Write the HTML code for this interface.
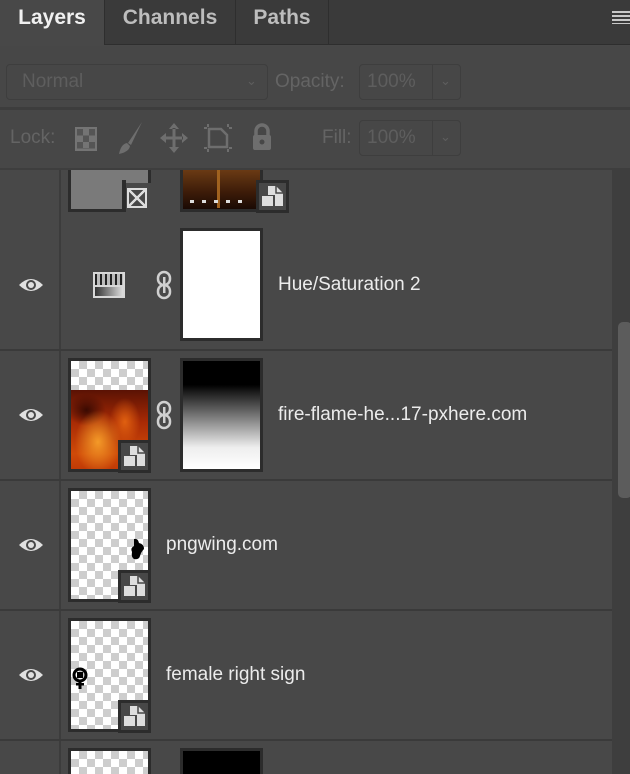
<!DOCTYPE html>
<html><head><meta charset="utf-8"><style>
*{margin:0;padding:0;box-sizing:border-box}
html,body{width:630px;height:774px;overflow:hidden}
body{background:#484848;font-family:"Liberation Sans",sans-serif;position:relative;color:#e6e6e6}
.a{position:absolute}
.tabbar{left:0;top:0;width:630px;height:45px;background:#3a3a3a;border-bottom:1px solid #2e2e2e}
.tab{top:0;height:45px;font-weight:bold;font-size:21px;line-height:35px;color:#bdbdbd;text-align:center}
.chk{background-color:#fff;background-image:linear-gradient(45deg,#cdcdcd 25%,transparent 25%,transparent 75%,#cdcdcd 75%),linear-gradient(45deg,#cdcdcd 25%,transparent 25%,transparent 75%,#cdcdcd 75%);background-size:16px 16px;background-position:0 0,8px 8px}
.th{border:3px solid #2c2c2c}
.sep{left:0;width:612px;height:2px;background:#3a3a3a}
.lbl{font-size:19px;color:#ececec}
.field{border:1px solid #3e3e3e;border-radius:4px;height:34px;font-size:19px;color:#5e5e5e;line-height:32px}
</style></head><body>
<div class="a tabbar"></div>
<div class="a tab" style="left:0;width:104px;background:#484848;color:#f0f0f0;height:46px">Layers</div>
<div class="a" style="left:104px;top:0;width:1px;height:45px;background:#2e2e2e"></div>
<div class="a tab" style="left:105px;width:130px">Channels</div>
<div class="a" style="left:235px;top:0;width:1px;height:45px;background:#2e2e2e"></div>
<div class="a tab" style="left:236px;width:92px">Paths</div>
<div class="a" style="left:328px;top:0;width:1px;height:45px;background:#2e2e2e"></div>
<div class="a" style="left:612px;top:11px;width:18px;height:13px;background:repeating-linear-gradient(#c8c8c8 0 2px,transparent 2px 4px)"></div>

<div class="a" style="left:0;top:46px;width:630px;height:62px;background:#474747"></div>
<div class="a field" style="left:6px;top:64px;width:262px;height:36px;padding-left:15px;line-height:34px">Normal</div>
<div class="a" style="left:246px;top:73px;font-size:13px;color:#5e5e5e">&#8964;</div>
<div class="a" style="left:275px;top:65px;font-size:19px;color:#646464;line-height:34px">Opacity:</div>
<div class="a field" style="left:359px;top:64px;width:102px;height:36px;padding-left:7px;line-height:34px">100%</div>
<div class="a" style="left:432px;top:65px;width:1px;height:34px;background:#3e3e3e"></div>
<div class="a" style="left:440px;top:73px;font-size:13px;color:#5e5e5e">&#8964;</div>
<div class="a" style="left:0;top:107px;width:630px;height:3px;background:#3d3d3d"></div>
<div class="a" style="left:0;top:110px;width:630px;height:59px;background:#474747"></div>
<div class="a" style="left:10px;top:121px;font-size:19px;color:#646464;line-height:34px">Lock:</div>
<div class="a" style="left:75px;top:127px;width:22px;height:24px;border:2px solid #747474;background:conic-gradient(#747474 25%,#555 0 50%,#747474 0 75%,#555 0);background-size:12px 13px"></div>
<svg class="a" style="left:117px;top:121px" width="26" height="34"><path d="M25 1 L11 22 L14 24 Z M10 22 Q4 23 2 33 Q12 31 13 25 Z" fill="#6e6e6e"/></svg>
<svg class="a" style="left:159px;top:122px" width="30" height="32"><path d="M15 1 L10 7 H20 Z M15 31 L10 25 H20 Z M1 16 L7 11 V21 Z M29 16 L23 11 V21 Z M13.5 6 H16.5 V26 H13.5 Z M6 14.5 H24 V17.5 H6 Z" fill="#6e6e6e"/></svg>
<svg class="a" style="left:203px;top:123px" width="30" height="30"><path d="M6 6 H18 L24 12 V24 H6 Z" fill="none" stroke="#6e6e6e" stroke-width="2.5"/><path d="M1 5h3M26 5h3M1 25h3M26 25h3M5 1v3M5 26v3M25 1v3M25 26v3" stroke="#6e6e6e" stroke-width="2"/></svg>
<svg class="a" style="left:251px;top:123px" width="22" height="28"><path d="M5 13 V8 A6 6 0 0 1 17 8 V13" fill="none" stroke="#6e6e6e" stroke-width="3.5"/><rect x="2" y="12" width="18" height="15" rx="2" fill="#6e6e6e"/><circle cx="11" cy="19" r="2.5" fill="#474747"/></svg>
<div class="a" style="left:322px;top:121px;font-size:19px;color:#646464;line-height:34px">Fill:</div>
<div class="a field" style="left:359px;top:120px;width:102px;height:36px;padding-left:7px;line-height:34px">100%</div>
<div class="a" style="left:432px;top:121px;width:1px;height:34px;background:#3e3e3e"></div>
<div class="a" style="left:440px;top:129px;font-size:13px;color:#5e5e5e">&#8964;</div>
<div class="a" style="left:0;top:168px;width:630px;height:2px;background:#3e3e3e"></div>

<div class="a" style="left:612px;top:170px;width:18px;height:604px;background:#3e3e3e"></div>
<div class="a" style="left:618px;top:322px;width:14px;height:176px;background:#5c5c5c;border-radius:5px"></div>
<div class="a" style="left:59px;top:170px;width:2px;height:604px;background:#3c3c3c"></div>

<!-- row 0 partial -->
<div class="a" style="left:68px;top:170px;width:83px;height:42px;background:#7a7a7a;border:3px solid #2c2c2c;border-top:none"></div>
<div class="a" style="left:125px;top:183px;width:30px;height:30px;background:#484848"></div>
<div class="a" style="left:122px;top:180px;width:4px;height:32px;background:#2c2c2c"></div>
<div class="a" style="left:127px;top:188px;width:20px;height:20px;border:2px solid #ddd;background:linear-gradient(45deg,transparent 45%,#ddd 45% 55%,transparent 55%),linear-gradient(-45deg,transparent 45%,#ddd 45% 55%,transparent 55%)"></div>
<div class="a th" style="left:180px;top:170px;width:83px;height:42px;border-top:none;background:linear-gradient(180deg,#6a3a14,#3a1a08 60%,#1a0a04);"></div>
<div class="a" style="left:217px;top:170px;width:3px;height:38px;background:#a0621f"></div>
<div class="a" style="left:190px;top:200px;width:60px;height:3px;background:repeating-linear-gradient(90deg,#ddd 0 4px,transparent 4px 12px)"></div>

<!-- row 1 hue/sat -->
<svg class="a" style="left:18px;top:276px" width="26" height="18"><path d="M1 9 Q13 -3 25 9 Q13 21 1 9 Z" fill="#e0e0e0"/><circle cx="13" cy="9" r="5" fill="#484848"/><circle cx="13" cy="9" r="3" fill="#e0e0e0"/></svg>
<div class="a" style="left:93px;top:272px;width:32px;height:26px;border:2px solid #d8d8d8;background:linear-gradient(#d8d8d8,#d8d8d8) 0 11px/100% 2px no-repeat,linear-gradient(90deg,#333,#ddd) 0 13px/100% 11px no-repeat,repeating-linear-gradient(90deg,#222 0 2px,#bbb 2px 5px)"></div>
<svg class="a" style="left:156px;top:270px" width="16" height="30"><rect x="2" y="2" width="12" height="13" rx="6" fill="none" stroke="#d0d0d0" stroke-width="2.5"/><rect x="2" y="15" width="12" height="13" rx="6" fill="none" stroke="#d0d0d0" stroke-width="2.5"/><rect x="7" y="7" width="2.5" height="16" fill="#d0d0d0"/></svg>
<div class="a th" style="left:180px;top:228px;width:83px;height:113px;background:#fff"></div>
<div class="a lbl" style="left:278px;top:274px">Hue/Saturation 2</div>
<div class="a sep" style="top:349px"></div>

<!-- row 2 fire -->
<svg class="a" style="left:18px;top:406px" width="26" height="18"><path d="M1 9 Q13 -3 25 9 Q13 21 1 9 Z" fill="#e0e0e0"/><circle cx="13" cy="9" r="5" fill="#484848"/><circle cx="13" cy="9" r="3" fill="#e0e0e0"/></svg>
<div class="a th" style="left:68px;top:358px;width:83px;height:114px;padding:0;overflow:hidden">
<div class="chk" style="height:29px"></div>
<div style="height:80px;background:radial-gradient(ellipse 30% 40% at 35% 65%,#f49a28 0,transparent 100%),radial-gradient(ellipse 20% 30% at 70% 40%,#e06010 0,transparent 100%),radial-gradient(ellipse 25% 20% at 20% 25%,#3a0a02 0,transparent 100%),linear-gradient(#5a1204,#a82a05 40%,#d04a08 80%,#c03a06)"></div>
</div>
<svg class="a" style="left:156px;top:400px" width="16" height="30"><rect x="2" y="2" width="12" height="13" rx="6" fill="none" stroke="#d0d0d0" stroke-width="2.5"/><rect x="2" y="15" width="12" height="13" rx="6" fill="none" stroke="#d0d0d0" stroke-width="2.5"/><rect x="7" y="7" width="2.5" height="16" fill="#d0d0d0"/></svg>
<div class="a th" style="left:180px;top:358px;width:83px;height:114px;background:linear-gradient(#000 0,#000 22%,#888 55%,#eee 80%,#fff)"></div>
<div class="a lbl" style="left:278px;top:404px">fire-flame-he...17-pxhere.com</div>
<div class="a sep" style="top:479px"></div>

<!-- row 3 pngwing -->
<svg class="a" style="left:18px;top:536px" width="26" height="18"><path d="M1 9 Q13 -3 25 9 Q13 21 1 9 Z" fill="#e0e0e0"/><circle cx="13" cy="9" r="5" fill="#484848"/><circle cx="13" cy="9" r="3" fill="#e0e0e0"/></svg>
<div class="a th chk" style="left:68px;top:488px;width:83px;height:114px"></div>
<svg class="a" style="left:129px;top:538px" width="18" height="24"><path d="M5 1 Q9 0 10 5 Q15 6 15 11 Q12 14 11 18 Q10 22 5 21 Q2 19 3 14 Q1 10 5 8 Z" fill="#000"/></svg>
<div class="a lbl" style="left:166px;top:534px">pngwing.com</div>
<div class="a sep" style="top:609px"></div>

<!-- row 4 female -->
<svg class="a" style="left:18px;top:666px" width="26" height="18"><path d="M1 9 Q13 -3 25 9 Q13 21 1 9 Z" fill="#e0e0e0"/><circle cx="13" cy="9" r="5" fill="#484848"/><circle cx="13" cy="9" r="3" fill="#e0e0e0"/></svg>
<div class="a th chk" style="left:68px;top:618px;width:83px;height:114px"></div>
<svg class="a" style="left:72px;top:667px" width="16" height="24"><circle cx="8" cy="8" r="6" fill="none" stroke="#000" stroke-width="3"/><rect x="5" y="5" width="6" height="6" fill="#000"/><rect x="6.5" y="13" width="3" height="9" fill="#000"/><rect x="4" y="16" width="8" height="2.5" fill="#000"/></svg>
<div class="a lbl" style="left:166px;top:664px">female right sign</div>
<div class="a sep" style="top:739px"></div>

<svg class="a" style="left:256px;top:180px" width="33" height="33"><rect x="1.5" y="1.5" width="30" height="30" fill="#474747" stroke="#2c2c2c" stroke-width="3"/><path d="M12 6 H20 L27 13 V26 H19 V15 H12 Z" fill="#ddd"/><path d="M20 6 V13 H27" fill="none" stroke="#474747" stroke-width="1.5"/><rect x="6" y="16" width="11" height="10" fill="#ddd"/></svg>
<svg class="a" style="left:118px;top:440px" width="33" height="33"><rect x="1.5" y="1.5" width="30" height="30" fill="#474747" stroke="#2c2c2c" stroke-width="3"/><path d="M12 6 H20 L27 13 V26 H19 V15 H12 Z" fill="#ddd"/><path d="M20 6 V13 H27" fill="none" stroke="#474747" stroke-width="1.5"/><rect x="6" y="16" width="11" height="10" fill="#ddd"/></svg>
<svg class="a" style="left:118px;top:570px" width="33" height="33"><rect x="1.5" y="1.5" width="30" height="30" fill="#474747" stroke="#2c2c2c" stroke-width="3"/><path d="M12 6 H20 L27 13 V26 H19 V15 H12 Z" fill="#ddd"/><path d="M20 6 V13 H27" fill="none" stroke="#474747" stroke-width="1.5"/><rect x="6" y="16" width="11" height="10" fill="#ddd"/></svg>
<svg class="a" style="left:118px;top:700px" width="33" height="33"><rect x="1.5" y="1.5" width="30" height="30" fill="#474747" stroke="#2c2c2c" stroke-width="3"/><path d="M12 6 H20 L27 13 V26 H19 V15 H12 Z" fill="#ddd"/><path d="M20 6 V13 H27" fill="none" stroke="#474747" stroke-width="1.5"/><rect x="6" y="16" width="11" height="10" fill="#ddd"/></svg>

<div class="a th chk" style="left:68px;top:748px;width:83px;height:26px;border-bottom:none"></div>
<div class="a th" style="left:180px;top:748px;width:83px;height:26px;border-bottom:none;background:#000"></div>
</body></html>
